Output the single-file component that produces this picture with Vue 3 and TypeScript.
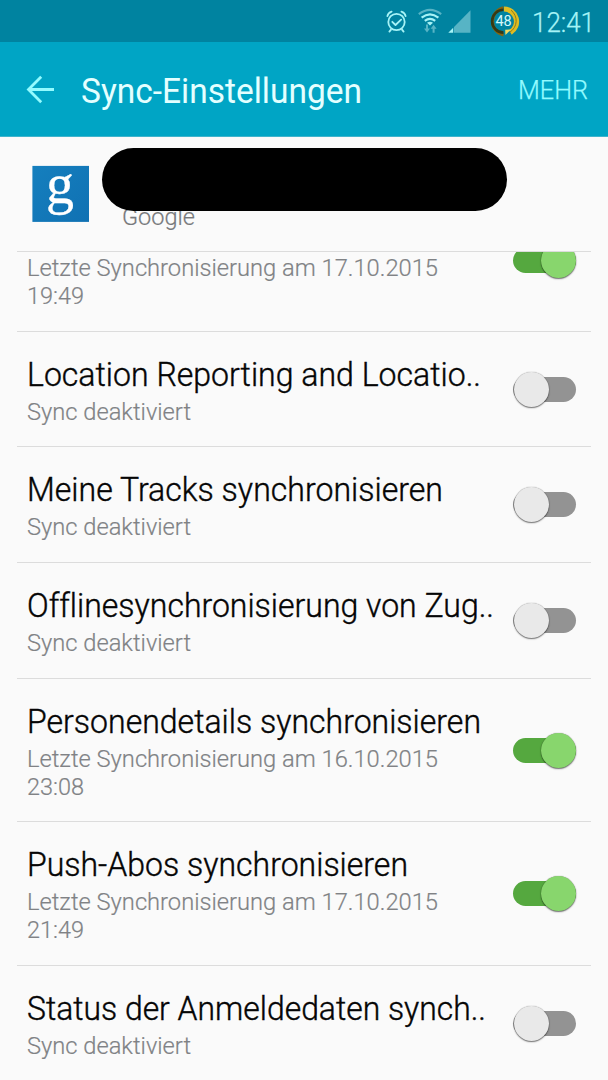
<script setup lang="ts">
interface SyncItem {
  title: string
  lines: string[]
  on: boolean
  width: number
}

const items: SyncItem[] = [
  { title: 'Location Reporting and Locatio..', lines: ['Sync deaktiviert'], on: false, width: 454 },
  { title: 'Meine Tracks synchronisieren', lines: ['Sync deaktiviert'], on: false, width: 416 },
  { title: 'Offlinesynchronisierung von Zug..', lines: ['Sync deaktiviert'], on: false, width: 467 },
  { title: 'Personendetails synchronisieren', lines: ['Letzte Synchronisierung am 16.10.2015', '23:08'], on: true, width: 454 },
  { title: 'Push-Abos synchronisieren', lines: ['Letzte Synchronisierung am 17.10.2015', '21:49'], on: true, width: 381 },
  { title: 'Status der Anmeldedaten synch..', lines: ['Sync deaktiviert'], on: false, width: 459 },
]
</script>

<template>
  <div class="screen">
    <header class="status">
      <svg class="status-icons" width="154" height="42" viewBox="380 0 154 42">
        <g fill="none" stroke="#a6f3f6" stroke-width="1.8" stroke-linecap="round" stroke-linejoin="round">
          <circle cx="396.5" cy="22" r="8.2" />
          <path d="M392.3 21.8l3.2 3.2 5.6-5.4" />
          <path d="M387.4 16.2q.6-3.6 4.2-4.6M405.6 16.2q-.6-3.6-4.2-4.6M391 29.6l-1.6 2M402 29.6l1.6 2" />
        </g>
        <g fill="none" stroke="#a6f3f6" stroke-width="2.1">
          <path stroke="#57b4c5" d="M418.8 14.2q11.2-8.6 22.4 0" />
          <path d="M421.6 17.6q8.4-6.6 16.8 0M424.8 20.9q5.2-4.2 10.4 0" />
        </g>
        <path fill="#a6f3f6" d="M427 22.8q3-2.2 6 0l-3 2.6z" />
        <path fill="#57b4c5" d="M426 24.6h2v4h2l-3 4-3-4h2zM432.6 32.8h2v-4h2l-3-4-3 4h2z" />
        <path fill="#57b4c5" d="M454 27L470.5 10.2V32.8H454z" />
        <path fill="#a6f3f6" d="M448.3 32.8l4.9-5v5z" />
        <path d="M503.5 35a13.9 13.9 0 0 1 0-27.2" fill="none" stroke="#836411" stroke-width="3" />
        <path d="M503.5 32.6a11.4 11.4 0 0 1 0-22.8" fill="none" stroke="#373914" stroke-width="2.6" />
        <path d="M504 9a12.6 12.6 0 0 1 6.4 23.4" fill="none" stroke="#dfbc22" stroke-width="5.2" />
        <path d="M511 10.2a13.4 13.4 0 0 1-1.2 22" fill="none" stroke="#8f7c1e" stroke-width="1" />
        <path d="M505.2 29.7l5.8-.2-5.6 5.6z" fill="#f2db62" />
        <text class="battery" x="503.6" y="25.9" text-anchor="middle">48</text>
      </svg>
      <svg class="clock" width="74" height="42"><text x="-2" y="32" textLength="63" lengthAdjust="spacingAndGlyphs">12:41</text></svg>
    </header>

    <nav class="bar">
      <svg class="back" width="28" height="28" viewBox="0 0 28 28" fill="none" stroke="#93fbff" stroke-width="2.8">
        <path d="M15.2 1.8L2.5 14.5l12.7 12.7M2.5 14.5H28" />
      </svg>
      <svg class="heading" width="290" height="50"><text x="0" y="38.5" textLength="281" lengthAdjust="spacingAndGlyphs">Sync-Einstellungen</text></svg>
      <svg class="more" width="72" height="50"><text x="0" y="35" textLength="70" lengthAdjust="spacingAndGlyphs">MEHR</text></svg>
    </nav>

    <section class="account">
      <svg class="logo" width="58" height="58" viewBox="0 0 58 58">
        <defs>
          <linearGradient id="tile" x1="0" y1="0" x2="1" y2="1">
            <stop offset="0" stop-color="#157fbe" />
            <stop offset="1" stop-color="#1071b3" />
          </linearGradient>
        </defs>
        <rect x=".4" y=".9" width="56.6" height="56" fill="url(#tile)" />
        <text class="logo-letter" x="28" y="38" text-anchor="middle">g</text>
      </svg>
      <div class="identity">
        <svg class="provider" width="80" height="30"><text x="0" y="23" textLength="73" lengthAdjust="spacingAndGlyphs">Google</text></svg>
        <div class="redaction"></div>
      </div>
    </section>

    <main class="list">
      <article class="row clipped">
        <div class="copy">
          <svg class="sub" width="480" height="28"><text x="0" y="22" textLength="411" lengthAdjust="spacingAndGlyphs">Letzte Synchronisierung am 17.10.2015</text></svg>
          <svg class="sub" width="480" height="28"><text x="0" y="22" textLength="57" lengthAdjust="spacingAndGlyphs">19:49</text></svg>
        </div>
        <div class="switch on"><i></i></div>
      </article>
      <article v-for="item in items" :key="item.title" class="row" :class="{ tall: item.lines.length > 1 }">
        <div class="copy">
          <svg class="title" width="480" height="42"><text x="0" y="30" :textLength="item.width" lengthAdjust="spacingAndGlyphs">{{ item.title }}</text></svg>
          <svg v-for="(line, i) in item.lines" :key="i" class="sub" width="480" height="28">
            <text x="0" y="22" :textLength="i ? 57 : item.lines.length > 1 ? 411 : 164" lengthAdjust="spacingAndGlyphs">{{ line }}</text>
          </svg>
        </div>
        <div class="switch" :class="{ on: item.on }"><i></i></div>
      </article>
    </main>
  </div>
</template>

<style>
body { margin: 0; overflow: hidden; background: #fafafa; }
</style>

<style scoped>
.screen {
  width: 608px;
  height: 1080px;
  overflow: hidden;
  display: flex;
  flex-direction: column;
  background: #fafafa;
  font-family: Roboto, sans-serif;
}
svg { display: block; flex: none; overflow: visible; }
.status {
  flex: none;
  height: 42px;
  display: flex;
  justify-content: flex-end;
  background: #0083a0;
}
.battery { font-size: 14.5px; fill: #d5f7fa; }
.clock { font-size: 27px; font-weight: 300; fill: #a6f3f6; stroke: #a6f3f6; stroke-width: 0.25px; }
.bar {
  flex: none;
  box-sizing: border-box;
  height: 95px;
  padding: 0 18px 0 26px;
  display: flex;
  align-items: center;
  background: #00a5c5;
  border-bottom: 1px solid #3fb4cc;
}
.back { margin-top: -1px; }
.heading { margin-left: 27px; font-size: 34.5px; fill: #e4ffff; }
.more { margin-left: auto; font-size: 26px; font-weight: 300; fill: #93fbff; stroke: #93fbff; stroke-width: 0.25px; }
.account {
  flex: none;
  height: 114px;
  display: flex;
}
.logo { margin: 28px 0 0 32px; }
.logo-letter { font: 56px "Liberation Serif", serif; fill: #fff; stroke: #fff; stroke-width: 0.3px; }
.identity { margin: 11px 0 0 12px; position: relative; width: 404.5px; height: 90px; }
.redaction {
  position: absolute;
  inset: 0 0 auto;
  height: 63px;
  border-radius: 32px;
  background: #000;
}
.provider {
  position: absolute;
  left: 20px;
  top: 54px;
  font-size: 24px;
  font-weight: 300;
  fill: #77797c;
  stroke: #77797c;
  stroke-width: 0.2px;
}
.list { flex: none; margin: 0 17px; }
.row {
  box-sizing: border-box;
  height: 115.7px;
  padding: 24px 15px 0 10px;
  border-top: 1.5px solid #dcdcdc;
  display: flex;
  justify-content: space-between;
}
.row.tall { height: 143.4px; }
.row.clipped { height: 79.7px; padding-top: 2px; overflow: hidden; }
.copy { width: 480px; }
.title {
  font-size: 33px;
  font-weight: 300;
  fill: #050505;
  stroke: #050505;
  stroke-width: 0.4px;
  font-variant-ligatures: none;
}
.sub { font-size: 24px; font-weight: 300; fill: #808285; stroke: #808285; stroke-width: 0.2px; }
.switch {
  flex: none;
  width: 63px;
  height: 25px;
  margin-top: 21px;
  border-radius: 13px;
  background: #939393;
}
.switch i {
  display: block;
  box-sizing: border-box;
  width: 35px;
  height: 35px;
  margin: -5px 0 0 0.5px;
  border-radius: 50%;
  background: #e9e9e9;
  box-shadow: 0 1px 1.5px rgba(0, 0, 0, 0.55), 0 0 1px rgba(0, 0, 0, 0.4);
}
.switch.on { background: #55a83f; }
.switch.on i { margin-left: 27.5px; background: #88d66d; }
.tall .switch { margin-top: 35px; }
.clipped .switch { margin-top: -6px; }
</style>
